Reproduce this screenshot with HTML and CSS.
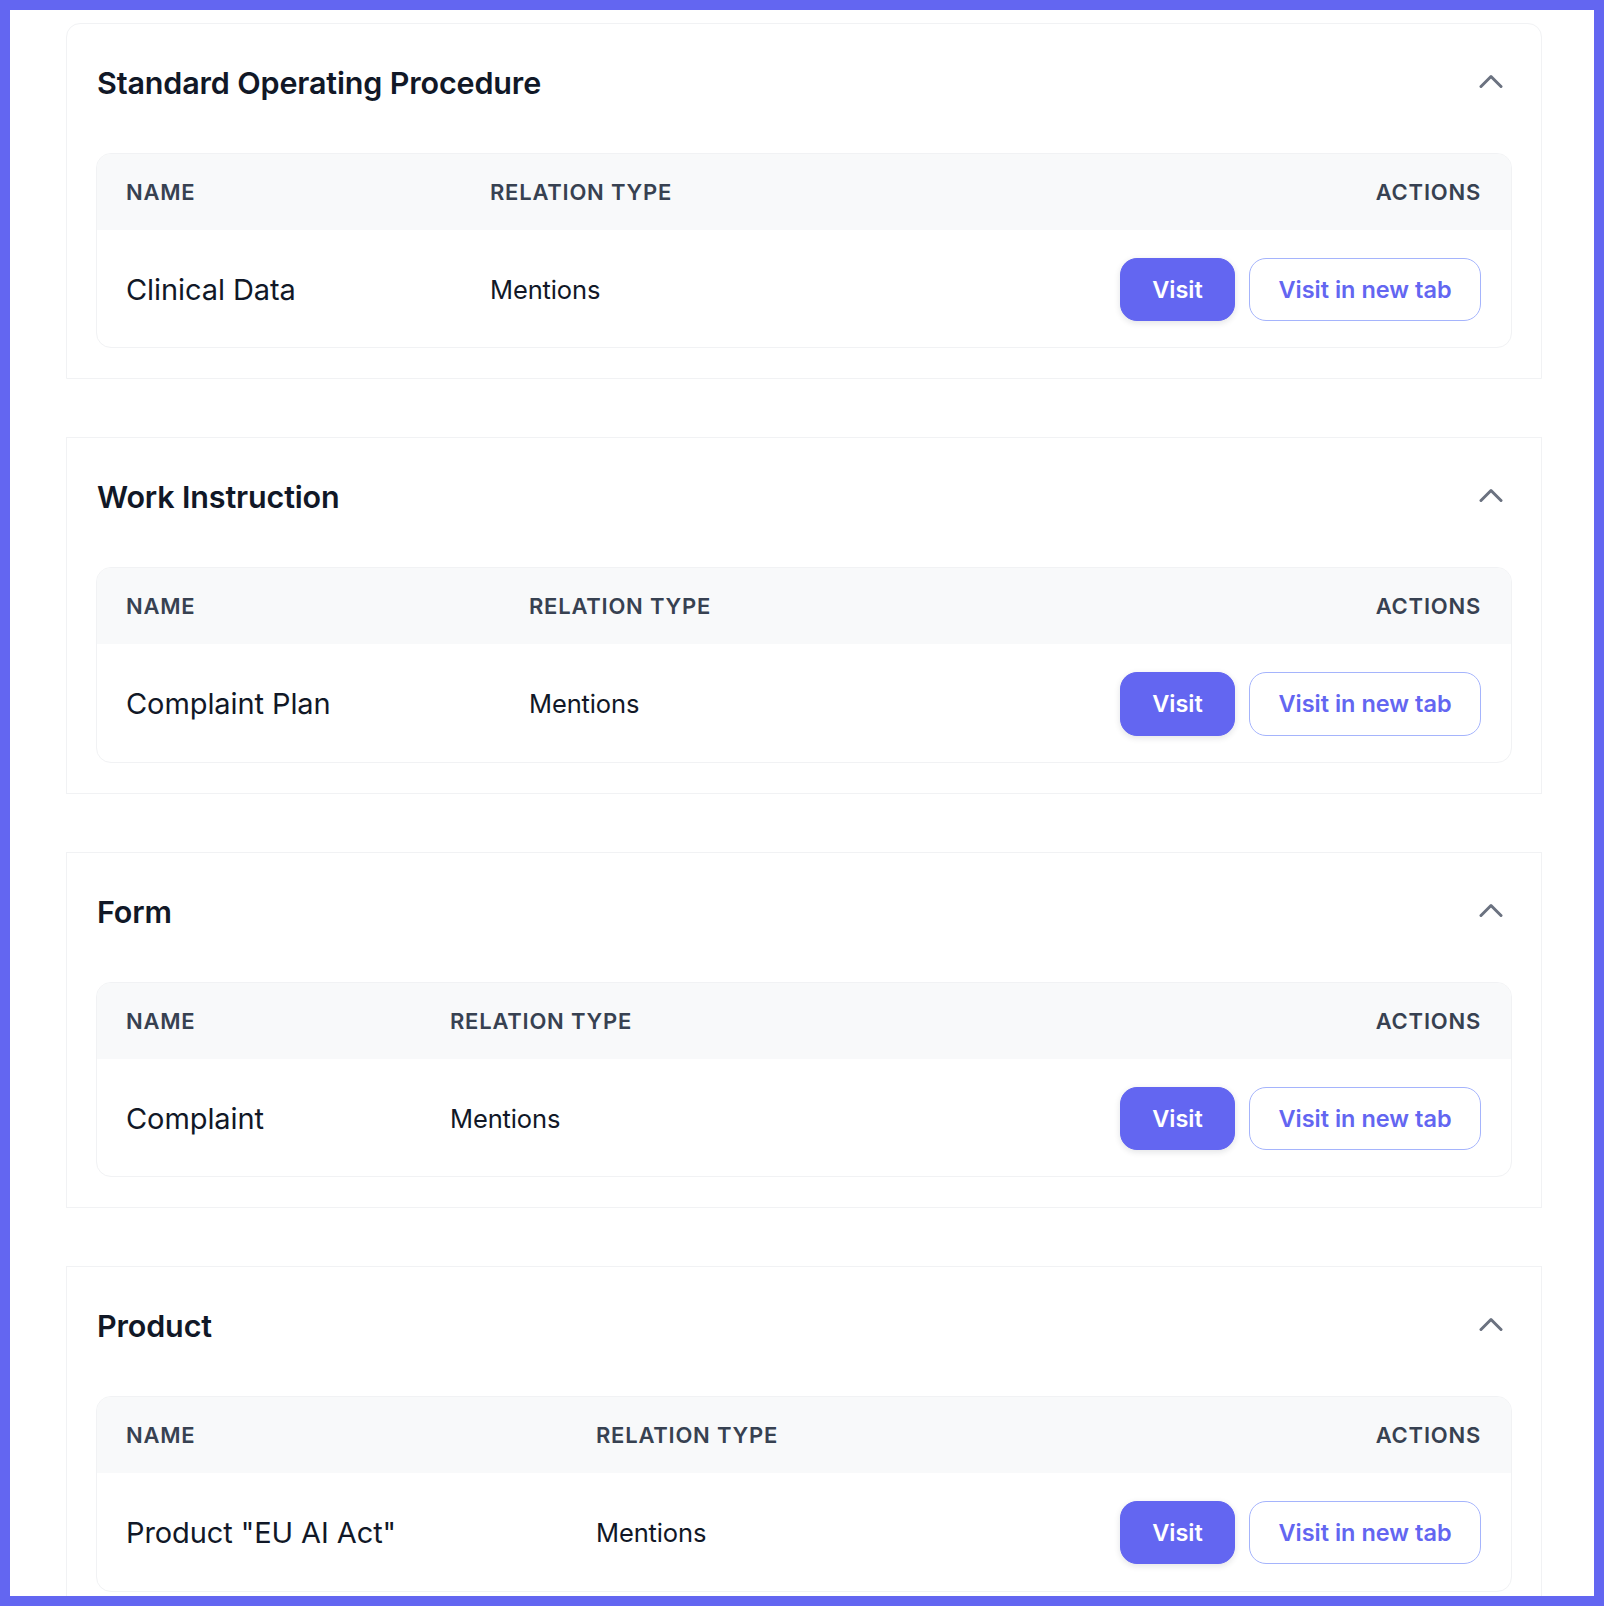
FILE: index.html
```html
<!DOCTYPE html>
<html lang="en">
<head>
<meta charset="utf-8">
<title>Relations</title>
<link rel="stylesheet" href="styles.css">
</head>
<body>
<div class="frame">
  <div class="list">
    <section class="card card-first">
      <div class="card-head">
        <h2 class="card-title">Standard Operating Procedure</h2>
        <button class="toggle" aria-label="Collapse"><svg width="24" height="16" viewBox="0 0 24 16"><polyline points="2,13.5 12,3.5 22,13.5" fill="none" stroke="#6b7280" stroke-width="3" stroke-linecap="round" stroke-linejoin="round"/></svg></button>
      </div>
      <div class="table cols-sop">
        <div class="row row-head"><span>Name</span><span>Relation Type</span><span class="right">Actions</span></div>
        <div class="row row-body"><span class="name">Clinical Data</span><span class="rel">Mentions</span><span class="actions"><button class="btn btn-primary">Visit</button><button class="btn btn-outline">Visit in new tab</button></span></div>
      </div>
    </section>
    <section class="card">
      <div class="card-head">
        <h2 class="card-title">Work Instruction</h2>
        <button class="toggle" aria-label="Collapse"><svg width="24" height="16" viewBox="0 0 24 16"><polyline points="2,13.5 12,3.5 22,13.5" fill="none" stroke="#6b7280" stroke-width="3" stroke-linecap="round" stroke-linejoin="round"/></svg></button>
      </div>
      <div class="table cols-wi">
        <div class="row row-head"><span>Name</span><span>Relation Type</span><span class="right">Actions</span></div>
        <div class="row row-body"><span class="name">Complaint Plan</span><span class="rel">Mentions</span><span class="actions"><button class="btn btn-primary">Visit</button><button class="btn btn-outline">Visit in new tab</button></span></div>
      </div>
    </section>
    <section class="card">
      <div class="card-head">
        <h2 class="card-title">Form</h2>
        <button class="toggle" aria-label="Collapse"><svg width="24" height="16" viewBox="0 0 24 16"><polyline points="2,13.5 12,3.5 22,13.5" fill="none" stroke="#6b7280" stroke-width="3" stroke-linecap="round" stroke-linejoin="round"/></svg></button>
      </div>
      <div class="table cols-form">
        <div class="row row-head"><span>Name</span><span>Relation Type</span><span class="right">Actions</span></div>
        <div class="row row-body"><span class="name">Complaint</span><span class="rel">Mentions</span><span class="actions"><button class="btn btn-primary">Visit</button><button class="btn btn-outline">Visit in new tab</button></span></div>
      </div>
    </section>
    <section class="card">
      <div class="card-head">
        <h2 class="card-title">Product</h2>
        <button class="toggle" aria-label="Collapse"><svg width="24" height="16" viewBox="0 0 24 16"><polyline points="2,13.5 12,3.5 22,13.5" fill="none" stroke="#6b7280" stroke-width="3" stroke-linecap="round" stroke-linejoin="round"/></svg></button>
      </div>
      <div class="table cols-product">
        <div class="row row-head"><span>Name</span><span>Relation Type</span><span class="right">Actions</span></div>
        <div class="row row-body"><span class="name">Product "EU AI Act"</span><span class="rel">Mentions</span><span class="actions"><button class="btn btn-primary">Visit</button><button class="btn btn-outline">Visit in new tab</button></span></div>
      </div>
    </section>
  </div>
</div>
</body>
</html>
```
FILE: styles.css
```css
* { box-sizing: border-box; }
html, body { margin: 0; padding: 0; }
body {
  background: #6366f1;
  font-family: Inter, "Liberation Sans", sans-serif;
  color: #111827;
}
.frame {
  margin: 10px;
  height: 1586px;
  background: #ffffff;
  overflow: hidden;
}
.list {
  display: flex;
  flex-direction: column;
  gap: 58px;
  padding-top: 13px;
  margin-left: 55.5px;
  width: 1476px;
}
.card {
  border: 1px solid #f1f2f4;
  background: #fff;
  padding: 30px 29px 30px 29.5px;
}
.card-first { border-radius: 14px 14px 0 0; }
.card-head {
  display: flex;
  align-items: center;
  justify-content: space-between;
  height: 54px;
  margin-bottom: 45px;
  padding-left: 1px;
}
.card-title {
  margin: 0;
  padding-top: 3px;
  font-family: Inter, "Liberation Sans", sans-serif;
  font-weight: 600;
  font-size: 30.5px;
  letter-spacing: -0.005em;
  color: #111827;
}
.toggle {
  width: 40px;
  height: 40px;
  margin-right: 1px;
  border: 0;
  background: transparent;
  padding: 0;
  display: flex;
  align-items: center;
  justify-content: center;
}
.table {
  border: 1px solid #f1f2f4;
  border-radius: 15px;
  overflow: hidden;
}
.row {
  display: grid;
  align-items: center;
  padding: 0 29.5px 0 29px;
}
.cols-sop .row { grid-template-columns: 364px 1fr auto; }
.cols-wi .row { grid-template-columns: 403px 1fr auto; }
.cols-form .row { grid-template-columns: 324px 1fr auto; }
.cols-product .row { grid-template-columns: 470px 1fr auto; }
.row-head {
  background: #f8f9fa;
  height: 75.8px;
  font-size: 22px;
  font-weight: 600;
  text-transform: uppercase;
  letter-spacing: 0.035em;
  color: #374151;
}
.right { text-align: right; }
.row-body {
  height: 117.6px;
  padding-top: 2px;
}
.name { font-size: 29px; letter-spacing: -0.003em; color: #111827; }
.rel { font-size: 25.5px; letter-spacing: -0.005em; color: #111827; }
.actions { display: flex; gap: 14px; justify-content: flex-end; }
.btn {
  font-family: Inter, "Liberation Sans", sans-serif;
  font-size: 23.5px;
  font-weight: 600;
  height: 63.4px;
  border-radius: 17px;
  padding: 0;
  cursor: pointer;
}
.btn-primary {
  width: 115px;
  background: #6366f1;
  color: #fff;
  border: 1px solid #6366f1;
  box-shadow: 0 2px 6px rgba(17, 24, 39, 0.12);
}
.btn-outline {
  width: 232px;
  background: #fff;
  color: #6366f1;
  border: 1px solid #a5b4fc;
}
```
